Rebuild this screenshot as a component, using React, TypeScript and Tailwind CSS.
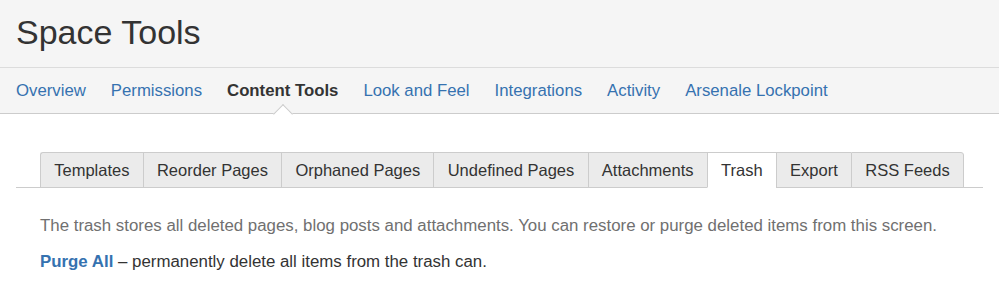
const navItems = [
  { label: 'Overview' },
  { label: 'Permissions' },
  { label: 'Content Tools', active: true },
  { label: 'Look and Feel' },
  { label: 'Integrations' },
  { label: 'Activity' },
  { label: 'Arsenale Lockpoint' },
]

const tabs = [
  'Templates',
  'Reorder Pages',
  'Orphaned Pages',
  'Undefined Pages',
  'Attachments',
  'Trash',
  'Export',
  'RSS Feeds',
]

function NavItem({ label, active }: { label: string; active?: boolean }) {
  if (active) {
    return (
      <div className="relative h-full flex items-center">
        <span className="text-[#333] font-bold">{label}</span>
        {/* notch pointing up at the active item */}
        <div className="absolute bottom-[-8px] left-1/2 -ml-[7px] w-[14px] h-[14px] rotate-45 bg-white border-t border-l border-[#ccc]" />
      </div>
    )
  }
  return (
    <a href="#" className="text-[#3572b0] hover:underline">
      {label}
    </a>
  )
}

export default function App() {
  return (
    <div className="w-[999px] h-[290px] bg-white overflow-hidden font-['Liberation_Sans',Arial,sans-serif]">
      {/* Header */}
      <div className="bg-[#f5f5f5]">
        <div className="h-[68px] px-4 pt-3 border-b border-[#dcdcdc]">
          <h1 className="text-[34px] leading-[40px] text-[#333]">Space Tools</h1>
        </div>
        <nav className="h-[46px] px-4 flex items-center gap-[25px] text-[16.75px] border-b border-[#ccc]">
          {navItems.map((item) => (
            <NavItem key={item.label} label={item.label} active={item.active} />
          ))}
        </nav>
      </div>

      {/* Tabs */}
      <div className="px-4 mt-[38px]">
        <ul className="flex pl-6 border-b border-[#ccc] text-[16.5px] text-[#333]">
          {tabs.map((tab, i) => {
            const active = tab === 'Trash'
            const first = i === 0
            const last = i === tabs.length - 1
            return (
              <li
                key={tab}
                className={
                  'h-[36px] -mb-px px-[13.25px] flex items-center border-t border-l border-b ' +
                  (active ? 'bg-white border-b-white border-[#ccc] ' : 'bg-[#ebebeb] border-[#ccc] ') +
                  (first ? 'rounded-tl-[3px] ' : '') +
                  (last ? 'border-r rounded-tr-[3px]' : '')
                }
              >
                {tab}
              </li>
            )
          })}
        </ul>
      </div>

      {/* Content */}
      <div className="pl-10 pr-4 text-[16.85px] leading-[20px]">
        <p className="mt-[28px] text-[#707070]">
          The trash stores all deleted pages, blog posts and attachments. You can restore or purge deleted items from this screen.
        </p>
        <p className="mt-4 text-[#333]">
          <a href="#" className="text-[#3572b0] font-bold">Purge All</a> – permanently delete all items from the trash can.
        </p>
      </div>
    </div>
  )
}
